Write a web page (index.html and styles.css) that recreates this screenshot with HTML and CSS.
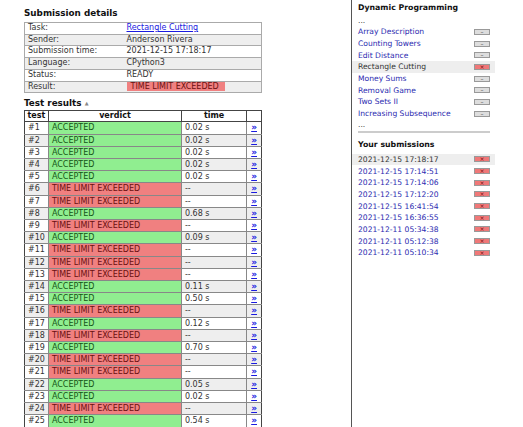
FILE: index.html
```html
<!DOCTYPE html>
<html>
<head>
<meta charset="utf-8">
<link rel="stylesheet" href="styles.css">
</head>
<body>
<div class="page">
  <div class="main">
    <h2 class="title">Submission details</h2>
    <table class="details">
      <tr><td class="k">Task:</td><td><a href="#" class="link">Rectangle Cutting</a></td></tr>
      <tr class="alt"><td class="k">Sender:</td><td>Anderson Rivera</td></tr>
      <tr><td class="k">Submission time:</td><td>2021-12-15 17:18:17</td></tr>
      <tr class="alt"><td class="k">Language:</td><td>CPython3</td></tr>
      <tr><td class="k">Status:</td><td>READY</td></tr>
      <tr class="alt"><td class="k">Result:</td><td><span class="badge">TIME LIMIT EXCEEDED</span></td></tr>
    </table>
    <h2 class="title sub">Test results <span class="caret">&#9650;</span></h2>
    <table class="tests">
      <tr class="head"><th class="c1">test</th><th class="c2">verdict</th><th class="c3">time</th><th class="c4"></th></tr>
      <tr><td>#1</td><td class="ok">ACCEPTED</td><td>0.02 s</td><td class="go"><a href="#">&raquo;</a></td></tr>
      <tr class="alt"><td>#2</td><td class="ok">ACCEPTED</td><td>0.02 s</td><td class="go"><a href="#">&raquo;</a></td></tr>
      <tr><td>#3</td><td class="ok">ACCEPTED</td><td>0.02 s</td><td class="go"><a href="#">&raquo;</a></td></tr>
      <tr class="alt"><td>#4</td><td class="ok">ACCEPTED</td><td>0.02 s</td><td class="go"><a href="#">&raquo;</a></td></tr>
      <tr><td>#5</td><td class="ok">ACCEPTED</td><td>0.02 s</td><td class="go"><a href="#">&raquo;</a></td></tr>
      <tr class="alt"><td>#6</td><td class="bad">TIME LIMIT EXCEEDED</td><td>--</td><td class="go"><a href="#">&raquo;</a></td></tr>
      <tr><td>#7</td><td class="bad">TIME LIMIT EXCEEDED</td><td>--</td><td class="go"><a href="#">&raquo;</a></td></tr>
      <tr class="alt"><td>#8</td><td class="ok">ACCEPTED</td><td>0.68 s</td><td class="go"><a href="#">&raquo;</a></td></tr>
      <tr><td>#9</td><td class="bad">TIME LIMIT EXCEEDED</td><td>--</td><td class="go"><a href="#">&raquo;</a></td></tr>
      <tr class="alt"><td>#10</td><td class="ok">ACCEPTED</td><td>0.09 s</td><td class="go"><a href="#">&raquo;</a></td></tr>
      <tr><td>#11</td><td class="bad">TIME LIMIT EXCEEDED</td><td>--</td><td class="go"><a href="#">&raquo;</a></td></tr>
      <tr class="alt"><td>#12</td><td class="bad">TIME LIMIT EXCEEDED</td><td>--</td><td class="go"><a href="#">&raquo;</a></td></tr>
      <tr><td>#13</td><td class="bad">TIME LIMIT EXCEEDED</td><td>--</td><td class="go"><a href="#">&raquo;</a></td></tr>
      <tr class="alt"><td>#14</td><td class="ok">ACCEPTED</td><td>0.11 s</td><td class="go"><a href="#">&raquo;</a></td></tr>
      <tr><td>#15</td><td class="ok">ACCEPTED</td><td>0.50 s</td><td class="go"><a href="#">&raquo;</a></td></tr>
      <tr class="alt"><td>#16</td><td class="bad">TIME LIMIT EXCEEDED</td><td>--</td><td class="go"><a href="#">&raquo;</a></td></tr>
      <tr><td>#17</td><td class="ok">ACCEPTED</td><td>0.12 s</td><td class="go"><a href="#">&raquo;</a></td></tr>
      <tr class="alt"><td>#18</td><td class="bad">TIME LIMIT EXCEEDED</td><td>--</td><td class="go"><a href="#">&raquo;</a></td></tr>
      <tr><td>#19</td><td class="ok">ACCEPTED</td><td>0.70 s</td><td class="go"><a href="#">&raquo;</a></td></tr>
      <tr class="alt"><td>#20</td><td class="bad">TIME LIMIT EXCEEDED</td><td>--</td><td class="go"><a href="#">&raquo;</a></td></tr>
      <tr><td>#21</td><td class="bad">TIME LIMIT EXCEEDED</td><td>--</td><td class="go"><a href="#">&raquo;</a></td></tr>
      <tr class="alt"><td>#22</td><td class="ok">ACCEPTED</td><td>0.05 s</td><td class="go"><a href="#">&raquo;</a></td></tr>
      <tr><td>#23</td><td class="ok">ACCEPTED</td><td>0.02 s</td><td class="go"><a href="#">&raquo;</a></td></tr>
      <tr class="alt"><td>#24</td><td class="bad">TIME LIMIT EXCEEDED</td><td>--</td><td class="go"><a href="#">&raquo;</a></td></tr>
      <tr><td>#25</td><td class="ok">ACCEPTED</td><td>0.54 s</td><td class="go"><a href="#">&raquo;</a></td></tr>
    </table>
  </div>
  <div class="side">
    <h3 class="stitle">Dynamic Programming</h3>
    <div class="dots">...</div>
    <ul class="list">
      <li><a href="#">Array Description</a><span class="btn">&ndash;</span></li>
      <li><a href="#">Counting Towers</a><span class="btn">&ndash;</span></li>
      <li><a href="#">Edit Distance</a><span class="btn">&ndash;</span></li>
      <li class="cur"><span class="name">Rectangle Cutting</span><span class="btn red">&times;</span></li>
      <li><a href="#">Money Sums</a><span class="btn">&ndash;</span></li>
      <li><a href="#">Removal Game</a><span class="btn">&ndash;</span></li>
      <li><a href="#">Two Sets II</a><span class="btn">&ndash;</span></li>
      <li><a href="#">Increasing Subsequence</a><span class="btn">&ndash;</span></li>
    </ul>
    <div class="dots last">...</div>
    <hr class="sep">
    <h3 class="stitle">Your submissions</h3>
    <ul class="list subs">
      <li class="cur"><span class="name">2021-12-15 17:18:17</span><span class="btn red">&times;</span></li>
      <li><a href="#">2021-12-15 17:14:51</a><span class="btn red">&times;</span></li>
      <li><a href="#">2021-12-15 17:14:06</a><span class="btn red">&times;</span></li>
      <li><a href="#">2021-12-15 17:12:20</a><span class="btn red">&times;</span></li>
      <li><a href="#">2021-12-15 16:41:54</a><span class="btn red">&times;</span></li>
      <li><a href="#">2021-12-15 16:36:55</a><span class="btn red">&times;</span></li>
      <li><a href="#">2021-12-11 05:34:38</a><span class="btn red">&times;</span></li>
      <li><a href="#">2021-12-11 05:12:38</a><span class="btn red">&times;</span></li>
      <li><a href="#">2021-12-11 05:10:34</a><span class="btn red">&times;</span></li>
    </ul>
  </div>
</div>
</body>
</html>
```

FILE: styles.css
```css
* { box-sizing: border-box; }
html, body { margin: 0; padding: 0; background: #fff; }
body {
  font-family: "DejaVu Sans", Verdana, sans-serif;
  font-size: 8px;
  color: #333;
}
.page { display: flex; height: 427px; overflow: hidden; }
.main { width: 352px; padding: 7px 0 0 24px; border-right: 1px solid #555; }
.title { font-size: 8.8px; font-weight: bold; margin: 0 0 2px 0; color: #111; line-height: 13px; }
.title.sub { margin: 4px 0 0 0; }
.caret { font-size: 5px; color: #888; vertical-align: middle; }
.details { border-collapse: collapse; width: 238px; margin: 0; }
.details td { border-top: 1px solid #aaa; border-bottom: 1px solid #aaa; padding: 0 3px; line-height: 10.7px; white-space: nowrap; }
.details tr td:first-child { border-left: 1px solid #aaa; width: 99px; }
.details tr td:last-child { border-right: 1px solid #aaa; }
.details tr.alt td { background: #eee; }
.link { color: #1a1ae0; text-decoration: underline; }
.badge { background: #f08080; color: #6b1010; padding: 0 6px 0 4px; }
.tests { border-collapse: collapse; width: 238px; margin-top: 0; }
.tests th { border: 1px solid #444; font-weight: bold; line-height: 10.2px; padding: 0; color: #111; }
.tests td { border: 1px solid #888; padding: 0 3px; line-height: 11.2px; white-space: nowrap; }
.tests td:first-child { border-left: 1px solid #444; }
.tests td:last-child { border-right: 1px solid #444; }
.tests .c1 { width: 23px; }
.tests .c2 { width: 134px; }
.tests .c3 { width: 66px; }
.tests .c4 { width: 15px; }
.tests tr.alt td { background: #eee; }
.tests tr td.ok { background: #90ee90; color: #155515; }
.tests tr td.bad { background: #f08080; color: #6b1010; }
.tests td.go { text-align: center; padding: 0; }
.go a { color: #1a1ae0; font-weight: bold; text-decoration: underline; font-size: 9px; }
.side { flex: 1; padding: 2px 0 0 6px; font-size: 7.6px; }
.stitle { font-size: 7.8px; font-weight: bold; margin: 0; color: #111; line-height: 12px; }
.dots { line-height: 10px; color: #333; padding-top: 2px; }
.dots.last { padding-top: 0; line-height: 9px; }
.list { list-style: none; margin: 0; padding: 0; width: 137px; }
.list li { display: flex; justify-content: space-between; align-items: center; height: 11.7px; padding-right: 5px; margin-left: -6px; padding-left: 6px; }
.list li.cur { background: #eee; }
.list a { color: #2b2bb0; text-decoration: none; }
.list .name { color: #333; }
.subs { margin-top: 3px; }
.btn { width: 16px; height: 6px; background: #ddd; border: 1px solid #999; font-size: 6px; line-height: 4px; text-align: center; color: #444; overflow: hidden; }
.btn.red { background: #f07878; color: #7a1010; }
.sep { border: 0; border-top: 2px solid #ccc; margin: 2px 0 6px 0; width: 132px; }
```
